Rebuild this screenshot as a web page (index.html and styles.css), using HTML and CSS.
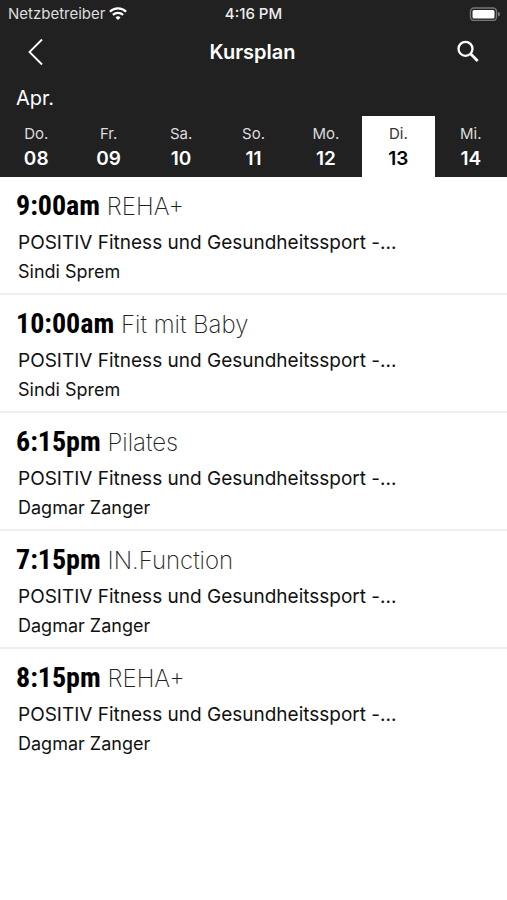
FILE: index.html
```html
<!DOCTYPE html>
<html lang="de">
<head>
<meta charset="utf-8">
<meta name="viewport" content="width=device-width, initial-scale=1">
<title>Kursplan</title>
<link rel="stylesheet" href="styles.css">
</head>
<body>
<header class="top">
  <div class="status">
    <div class="carrier"><span>Netzbetreiber</span>
      <svg class="wifi" viewBox="0 0 18 14" aria-hidden="true"><path d="M9 13 6.5 10.4a3.6 3.6 0 0 1 5 0z" fill="currentColor"/><path d="M3.9 7.9a7.3 7.3 0 0 1 10.2 0M.9 4.7a11.6 11.6 0 0 1 16.2 0" fill="none" stroke="currentColor" stroke-width="2.2"/></svg>
    </div>
    <div class="clock">4:16 PM</div>
    <svg class="battery" viewBox="0 0 32 14" aria-hidden="true"><rect x="1.5" y="1" width="26" height="12.5" rx="3.5" fill="none" stroke="#777" stroke-width="1.4"/><rect x="3.5" y="3" width="22" height="8.5" rx="1.5" fill="#fff"/><path d="M29 4.8q2 .5 2 2.4t-2 2.4z" fill="#777"/></svg>
  </div>
  <nav class="bar">
    <button class="icon" aria-label="Zurück"><svg viewBox="0 0 28 28" aria-hidden="true"><path d="M20 1.5 7.5 14 20 26.5" fill="none" stroke="currentColor" stroke-width="1.8"/></svg></button>
    <h1>Kursplan</h1>
    <button class="icon" aria-label="Suchen"><svg viewBox="0 0 28 28" aria-hidden="true"><circle cx="10.5" cy="10.8" r="7" fill="none" stroke="currentColor" stroke-width="2.3"/><path d="m15.5 15.8 7.2 7.2" stroke="currentColor" stroke-width="2.8"/></svg></button>
  </nav>
  <div class="month">Apr.</div>
  <div class="days">
    <button class="day">Do.<b>08</b></button>
    <button class="day">Fr.<b>09</b></button>
    <button class="day">Sa.<b>10</b></button>
    <button class="day">So.<b>11</b></button>
    <button class="day">Mo.<b>12</b></button>
    <button class="day selected" aria-pressed="true">Di.<b>13</b></button>
    <button class="day">Mi.<b>14</b></button>
  </div>
</header>
<main>
  <article class="course"><h2><b>9:00am</b> REHA+</h2><p class="place">POSITIV Fitness und Gesundheitssport -...</p><p class="trainer">Sindi Sprem</p></article>
  <article class="course"><h2><b>10:00am</b> Fit mit Baby</h2><p class="place">POSITIV Fitness und Gesundheitssport -...</p><p class="trainer">Sindi Sprem</p></article>
  <article class="course"><h2><b>6:15pm</b> Pilates</h2><p class="place">POSITIV Fitness und Gesundheitssport -...</p><p class="trainer">Dagmar Zanger</p></article>
  <article class="course"><h2><b>7:15pm</b> IN.Function</h2><p class="place">POSITIV Fitness und Gesundheitssport -...</p><p class="trainer">Dagmar Zanger</p></article>
  <article class="course"><h2><b>8:15pm</b> REHA+</h2><p class="place">POSITIV Fitness und Gesundheitssport -...</p><p class="trainer">Dagmar Zanger</p></article>
</main>
</body>
</html>
```
FILE: styles.css
```css
* { box-sizing: border-box; margin: 0; padding: 0; }
body { background: #fff; color: #111; font-family: Inter, "Liberation Sans", sans-serif; }
button { border: 0; background: none; color: inherit; font: inherit; }
.top { background: #212121; color: #fff; }
.status { display: grid; grid-template-columns: 1fr auto 1fr; align-items: center; height: 27px; padding: 0 8px; font-size: 15px; }
.carrier { display: flex; align-items: center; gap: 4px; color: #ddd; }
.wifi { width: 18px; height: 14px; color: #fff; }
.clock { color: #eee; font-weight: 500; }
.battery { width: 32px; height: 14px; justify-self: end; margin-right: -2px; }
.bar { display: flex; align-items: center; justify-content: space-between; height: 49px; padding: 0 24px 0 22px; }
.bar h1 { font-size: 20px; font-weight: 600; }
.icon { width: 28px; height: 28px; }
.icon svg { display: block; width: 28px; height: 28px; }
.month { height: 40px; padding: 0 16px; font-size: 20px; line-height: 44px; }
.days { display: grid; grid-template-columns: repeat(7, 1fr); }
.day { display: flex; flex-direction: column; align-items: center; height: 61px; padding-top: 5px; color: #ddd; font-size: 15px; line-height: 25px; }
.day b { color: #fff; font-size: 19px; font-weight: 600; }
.selected { background: #fff; color: #333; }
.selected b { color: #000; }
.course { padding: 12px 16px 8px; border-bottom: 2px solid #efefef; }
.course:last-child { border-bottom: 0; }
.course h2 { margin-bottom: 3px; color: #222; font: 200 24px/36px Inter, sans-serif; }
.course h2 b { color: #000; font: bold 28px/28px "Roboto Condensed", "Liberation Sans Narrow", "Liberation Sans", sans-serif; }
.course p { padding-left: 2px; }
.place { font-size: 19px; line-height: 30px; }
.trainer { font-size: 18px; line-height: 27px; }
```
